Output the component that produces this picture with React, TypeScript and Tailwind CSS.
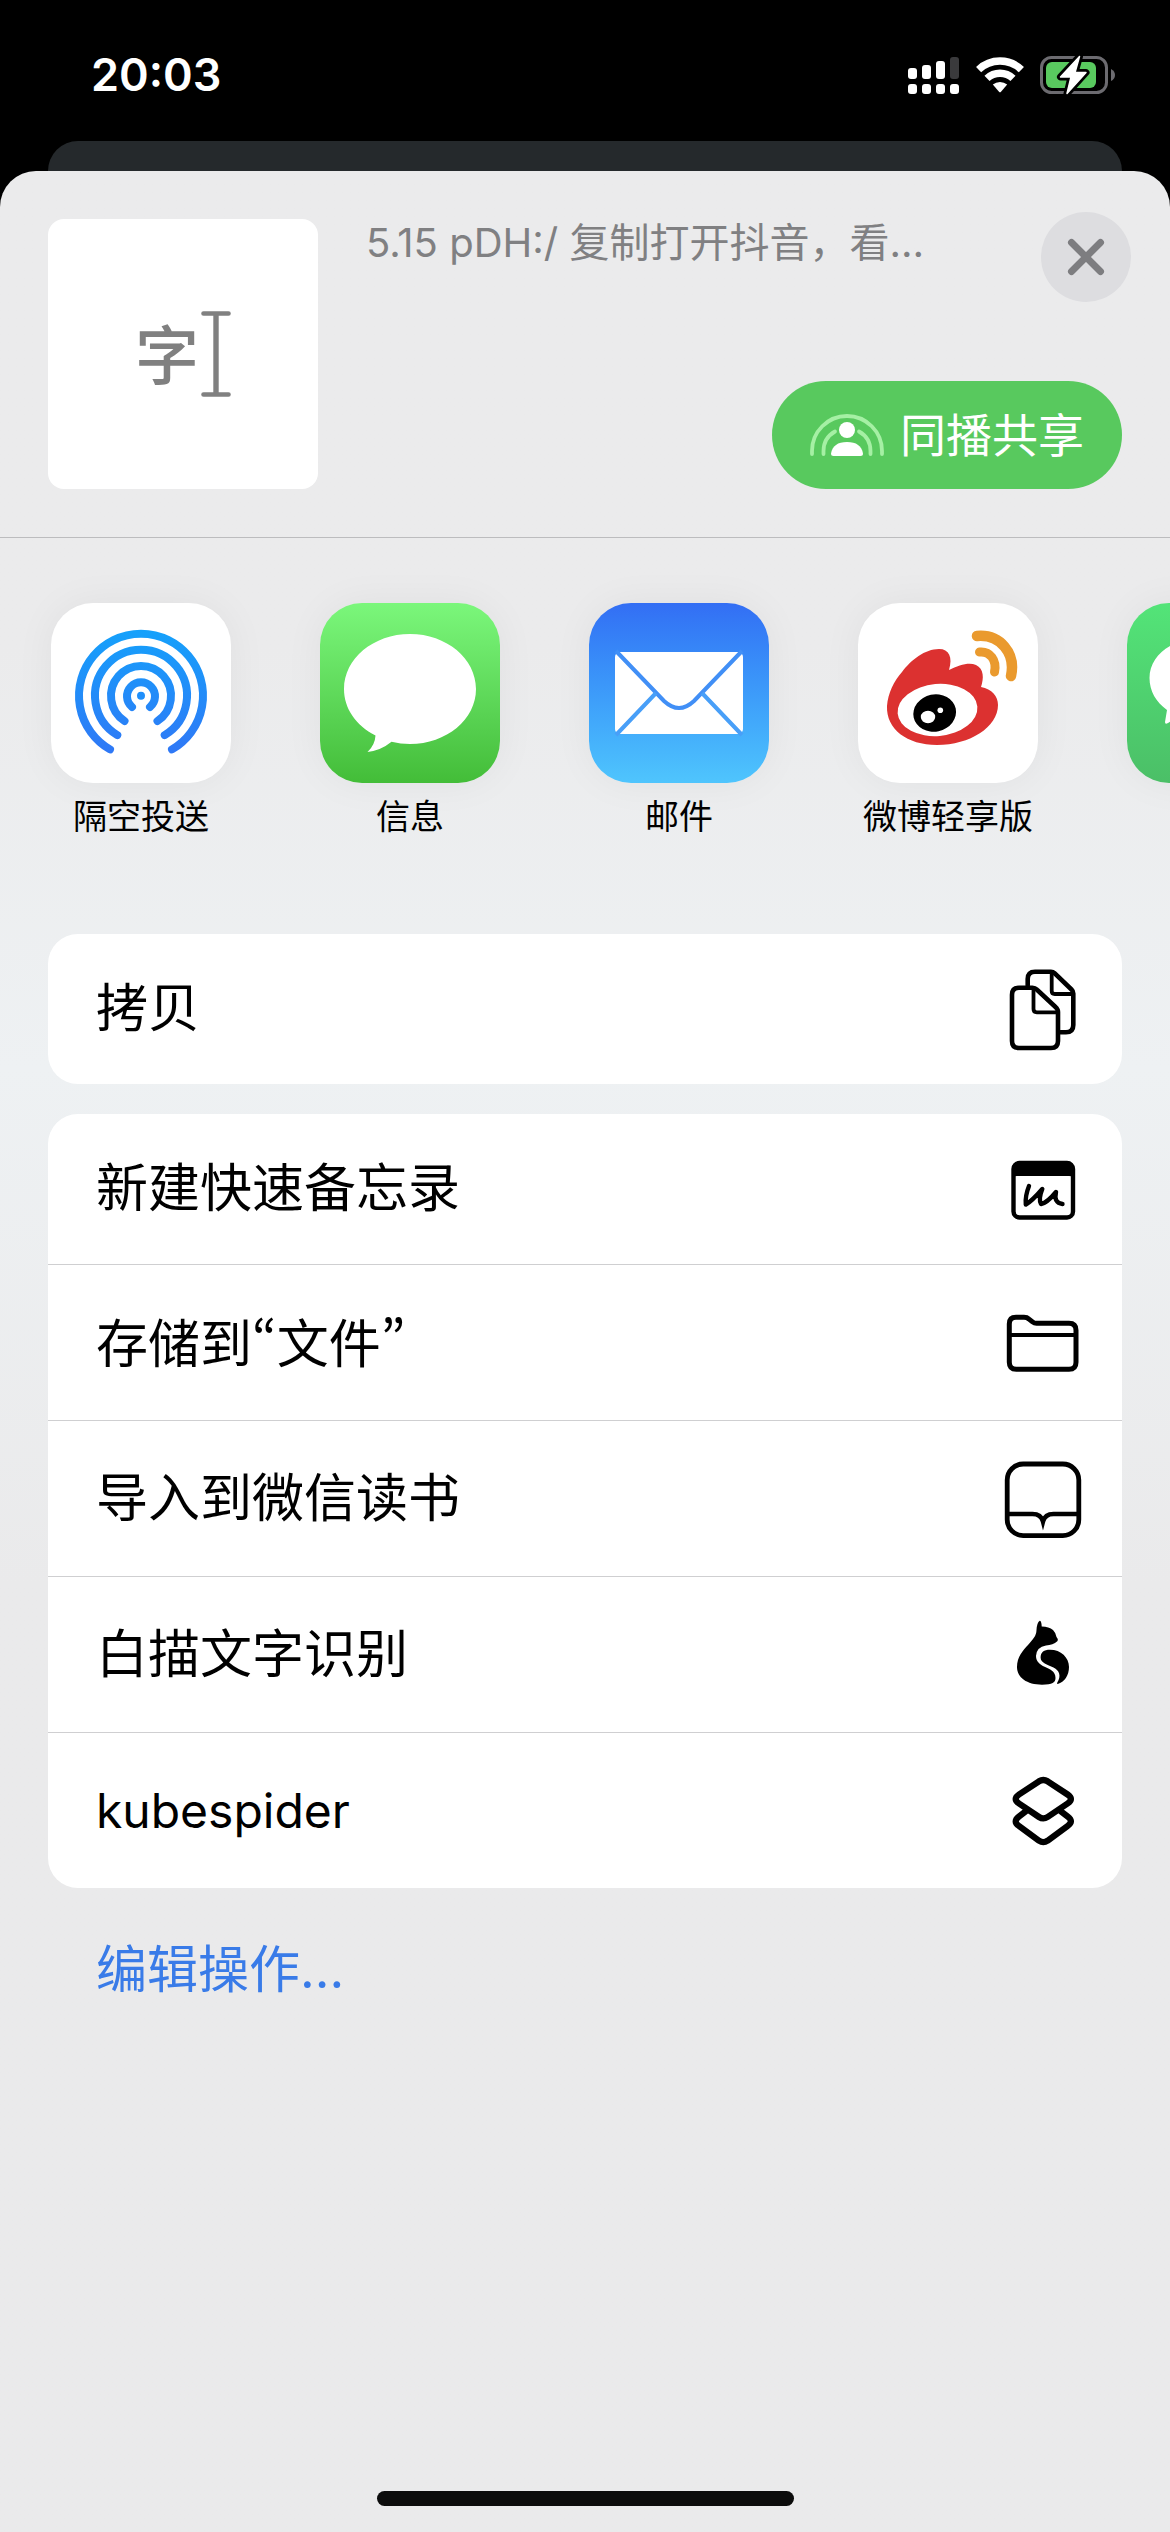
import type { ReactNode } from "react";

/* ---------- status bar ---------- */

function SignalIcon() {
  return (
    <svg width="52" height="38" viewBox="0 0 52 38" fill="#fff" aria-hidden="true">
      <rect x="0" y="12" width="9" height="11" rx="3" />
      <rect x="14" y="9" width="9" height="14" rx="3" />
      <rect x="28" y="5" width="9" height="18" rx="3" />
      <rect x="42" y="1" width="9" height="22" rx="3" fill="#3a3a3c" />
      <rect x="0" y="28" width="9" height="10" rx="3" />
      <rect x="14" y="28" width="9" height="10" rx="3" />
      <rect x="28" y="28" width="9" height="10" rx="3" />
      <rect x="42" y="28" width="9" height="10" rx="3" />
    </svg>
  );
}

function WifiIcon() {
  return (
    <svg width="48" height="38" viewBox="0 0 48 38" aria-hidden="true">
      <g fill="none" stroke="#fff" strokeWidth="7.4">
        <path d="M2.6 13.6a31 31 0 0 1 42.8 0" />
        <path d="M11 22.4a19 19 0 0 1 26 0" />
      </g>
      <path d="M16.8 28.6a11 11 0 0 1 14.4 0L25 35.8q-1 1-2 0z" fill="#fff" />
    </svg>
  );
}

function BatteryIcon() {
  return (
    <svg width="76" height="40" viewBox="0 0 76 40" aria-hidden="true">
      <rect x="1.5" y="2.5" width="65" height="35" rx="10" fill="none" stroke="#6c6b70" strokeWidth="3" />
      <path d="M71 14q4 2 4 6t-4 6z" fill="#6c6b70" />
      <rect x="6" y="7" width="50" height="26" rx="6" fill="#59c95f" />
      <path
        d="M39.5 1.5 20.5 22H31l-4 16.5L46 17.5H35z"
        fill="#fff"
        stroke="#000"
        strokeWidth="7"
        strokeLinejoin="round"
        paintOrder="stroke"
      />
      <path d="M39.5 1.5 20.5 22H31l-4 16.5L46 17.5H35z" fill="#fff" stroke="#fff" strokeWidth="1.5" strokeLinejoin="round" />
    </svg>
  );
}

/* ---------- header ---------- */

function CursorIcon() {
  return (
    <svg width="30" height="86" viewBox="0 0 30 86" fill="none" stroke="#808080" strokeLinecap="round" aria-hidden="true">
      <path d="M2.5 2.5h25M2.5 83.5h25" strokeWidth="4.6" />
      <path d="M15 4v78" strokeWidth="5.4" />
    </svg>
  );
}

function SharePlayIcon() {
  return (
    <svg width="74" height="42" viewBox="0 0 74 42" aria-hidden="true">
      <g fill="none" stroke="#a5f0a4" strokeWidth="3.8" strokeLinecap="round">
        <path d="M2 40v-3a35 35 0 0 1 70 0v3" />
        <path d="M13.5 40v-3q0-13 11.500-19.500M60.500 40v-3q0-13-11.500-19.500" />
      </g>
      <circle cx="37" cy="16" r="8" fill="#fff" />
      <path d="M21 39.500Q23 28 37 28t16 11.500q0 2.500-2.500 2.500h-27q-2.500 0-2.500-2.500z" fill="#fff" />
    </svg>
  );
}

/* ---------- app icons ---------- */

function AirDropIcon() {
  return (
    <svg className="size-full" viewBox="0 0 180 180" fill="none" aria-hidden="true">
      <defs>
        <linearGradient id="airdrop" gradientUnits="userSpaceOnUse" x1="0" y1="27" x2="0" y2="150">
          <stop offset="0" stopColor="#15a1fb" />
          <stop offset="1" stopColor="#2f78f6" />
        </linearGradient>
      </defs>
      <g stroke="url(#airdrop)" strokeWidth="8" strokeLinecap="round">
        <path d="M59 146.400a62 62 0 1 1 62 0" />
        <path d="M66.300 132.100a46 46 0 1 1 47.400 0" />
        <path d="M73.500 118a30 30 0 1 1 33 0" />
        <path d="M81 104a14 14 0 1 1 18 0" />
      </g>
      <circle cx="90" cy="92.700" r="4" fill="#1f8ffb" />
    </svg>
  );
}

function MessagesIcon() {
  return (
    <svg className="size-full" viewBox="0 0 180 180" fill="#fff" aria-hidden="true">
      <path d="M90 31c36.500 0 66 24.600 66 55s-29.500 55-66 55q-9.500 0-18.500-2.200Q61 147.500 47.500 149q7.500-7 8-16.500C36 122.500 24 105.500 24 86c0-30.400 29.500-55 66-55z" />
    </svg>
  );
}

function MailIcon() {
  return (
    <svg className="size-full" viewBox="0 0 180 180" fill="none" aria-hidden="true">
      <rect x="26" y="49" width="128" height="82" rx="5" fill="#fff" />
      <g strokeWidth="4">
        <path d="M27 48 75 98q15 14 30 0l48-50" stroke="#418ff6" />
        <path d="M27 132 67 90M153 132l-40-42" stroke="#489ff8" />
      </g>
    </svg>
  );
}

function WeiboIcon() {
  return (
    <svg className="size-full" viewBox="0 0 180 180" fill="none" aria-hidden="true">
      <path
        d="M29 103C30 90 36 78 44 69 53 57 67 46 81 46c10 0 14 8 10 21 10-5 20-8 27-5 8 4 8 13 5 22 11 2 17 9 17 18 0 22-28 40-61 40-30 0-51-16-50-39z"
        fill="#dc3130"
      />
      <ellipse cx="79.500" cy="107" rx="40" ry="26" transform="rotate(-5 79.500 107)" fill="#fff" />
      <ellipse cx="76.700" cy="110" rx="21.500" ry="18.600" transform="rotate(-12 76.700 110)" fill="#000" />
      <ellipse cx="70" cy="114" rx="7.200" ry="6.200" fill="#fff" />
      <circle cx="82.300" cy="107.300" r="2.800" fill="#fff" />
      <path d="M119 33C142 31 158 50 153 73" stroke="#ea9a2e" strokeWidth="10.500" strokeLinecap="round" />
      <path d="M121.500 49C132 48 139 57 136.500 69" stroke="#ea9a2e" strokeWidth="9" strokeLinecap="round" />
    </svg>
  );
}

function WeChatIcon() {
  return (
    <svg className="size-full" viewBox="0 0 180 180" fill="#fff" aria-hidden="true">
      <path d="M67 37c25 0 45 17 45 38s-20 38-45 38q-6 0-12-1.500L41 120q-3 2-3-1l2-12C29 99 22.500 88 22.500 75c0-21 20-38 44.500-38z" />
      <ellipse cx="116" cy="111" rx="37" ry="31" />
    </svg>
  );
}

/* ---------- action icons ---------- */

function ActionIcon({ children }: { children: ReactNode }) {
  return (
    <svg
      className="size-[84px] shrink-0"
      viewBox="0 0 84 84"
      fill="none"
      stroke="#000"
      strokeLinecap="round"
      strokeLinejoin="round"
      aria-hidden="true"
    >
      {children}
    </svg>
  );
}

const copyIcon = (
  <ActionIcon>
    <g strokeWidth="4.600">
      <path d="M26.700 18.500V12q0-7.300 7.300-7.300h16q2 0 3.500 1.500L70.500 22.500q1.800 1.700 1.800 4V58q0 7.300-7.300 7.300h-5.500" />
      <path d="M50.700 5.500V24q0 3 3 3H72" strokeWidth="3.800" />
      <path d="M18 20.700h13.500q2.500 0 4.500 2L54.500 40q2.500 2.200 2.500 5v29q0 7-7 7H18q-7 0-7-7V27.700q0-7 7-7z" />
      <path d="M32.500 21.500V42q0 3.300 3.300 3.300H56.500" strokeWidth="3.800" />
    </g>
  </ActionIcon>
);

const memoIcon = (
  <ActionIcon>
    <rect x="12.500" y="16" width="59.500" height="54.500" rx="6" strokeWidth="4.400" />
    <path d="M12 29v-7q0-6 6-6h48q6 0 6 6v7q-1-1-4-1H16q-3 0-4 1z" fill="#000" strokeWidth="2" />
    <path
      d="M28 39Q24 49 24.800 57.500 31 54 41.300 42q-4 10-1.300 15 6-1 15-12-2.500 11 6.500 12"
      strokeWidth="4.400"
    />
  </ActionIcon>
);

const folderIcon = (
  <ActionIcon>
    <path
      d="M8.300 23q0-6.700 6.700-6.700h8q3 0 5 1.800l3.500 2.800q1.800 1.400 4 1.400H68q7 0 7 7v32q0 7-7 7H15.300q-7 0-7-7z"
      strokeWidth="5"
    />
    <path d="M9 34h65" strokeWidth="4.200" />
  </ActionIcon>
);

const bookIcon = (
  <ActionIcon>
    <rect x="6.200" y="7" width="71.600" height="71.600" rx="16" strokeWidth="4.800" />
    <path d="M7 57h24.500q8.500 0 10.500 7.500Q44 57 52.500 57H77" strokeWidth="4.600" strokeLinejoin="miter" />
  </ActionIcon>
);

const catIcon = (
  <ActionIcon>
    <g fill="#000" stroke="none">
      <path d="M38.700 7.700q1.800 0 2 5.800 7.300.2 11.300 3.500Q55 20 55.500 24q2.200 2.500.8 4.300Q52 32 45 32.500 35.500 34 35 43c0 5.500 4 8.500 8 10.500 6 3 11.500 4.500 11.500 11.500 0 4.500-3 6.700-13.500 6.700C26 71.700 16 64.500 16 54c0-10 6-16.500 11-22 5-5.700 8.300-9 8.500-15q.4-7.500 3.200-9.300z" />
      <path d="M39.600 44.500C39.600 39 43 36.700 49 36.700 60 36.700 68 44.500 68 54c0 8.500-4.500 15-11.300 17q-1 0-.5-1.200c4.300-7 2.300-12.300-3.700-15.300-6-2.800-12.900-4.500-12.900-10z" />
    </g>
  </ActionIcon>
);

const shortcutsIcon = (
  <ActionIcon>
    <g strokeWidth="6.300">
      <path d="M38 12.300q4.300-2.600 8.600 0l20 13.200q6.600 4.500 0 9L46.600 48q-4.300 2.800-8.600 0L18 34.500q-6.600-4.500 0-9z" />
      <path d="M24.500 42.500 18 47.500q-6.600 5 0 9.500l20 14.700q4.300 2.800 8.600 0l20-14.700q6.600-4.500 0-9.500l-6.500-5" />
    </g>
  </ActionIcon>
);

/* ---------- data ---------- */

const apps = [
  { name: "隔空投送", tile: "bg-white", icon: <AirDropIcon /> },
  { name: "信息", tile: "bg-linear-to-b from-[#7bf77b] to-[#43bd38]", icon: <MessagesIcon /> },
  { name: "邮件", tile: "bg-linear-to-b from-[#336ef4] to-[#4fc5fd]", icon: <MailIcon /> },
  { name: "微博轻享版", tile: "bg-white", icon: <WeiboIcon /> },
  { name: "", tile: "bg-linear-to-b from-[#53e478] to-[#4bbf67]", icon: <WeChatIcon /> },
];

/* Quotation marks take the Korean face, whose marks are curled and narrow. */
function Quote({ children }: { children: string }) {
  return (
    <span lang="ko" className="font-['Noto_Sans_CJK_KR',sans-serif]">
      {children}
    </span>
  );
}

const actions: { id: string; label: ReactNode; icon: ReactNode }[] = [
  { id: "memo", label: "新建快速备忘录", icon: memoIcon },
  {
    id: "files",
    label: (
      <>
        存储到<Quote>“</Quote>文件<Quote>”</Quote>
      </>
    ),
    icon: folderIcon,
  },
  { id: "weread", label: "导入到微信读书", icon: bookIcon },
  { id: "baimiao", label: "白描文字识别", icon: catIcon },
  { id: "kubespider", label: <span className="text-[48px]">kubespider</span>, icon: shortcutsIcon },
];

function ActionRow({ label, icon }: { label: ReactNode; icon: ReactNode }) {
  return (
    <button
      type="button"
      className="flex h-[156px] w-full items-center justify-between border-t border-[#cfcfd1] pr-[37px] pl-12 text-left text-[52px] leading-[72px] text-black first:h-[150px] first:border-t-0"
    >
      <span>{label}</span>
      {icon}
    </button>
  );
}

export default function App() {
  return (
    <div
      lang="zh-CN"
      className="flex min-h-screen flex-col overflow-hidden bg-black font-['Inter','Noto_Sans_CJK_SC',sans-serif]"
    >
      <header className="flex h-[141px] items-center justify-between pt-[8px] pr-[54px] pl-[91px]">
        <time className="text-[45px] leading-[56px] font-semibold text-white">20:03</time>
        <div className="flex items-center gap-[16px]">
          <SignalIcon />
          <WifiIcon />
          <BatteryIcon />
        </div>
      </header>
      <div className="mx-12 h-[30px] rounded-t-[30px] bg-[#25292c]" />

      <main className="flex flex-1 flex-col rounded-t-[36px] bg-linear-to-b from-[#ebebec] from-20% via-[#eef1f3] via-38% to-[#eaeaeb] to-60%">
        <section className="flex gap-12 border-b border-[#bcbcbe] pt-[41px] pr-[39px] pb-12 pl-12">
          <div className="mt-[7px] flex size-[270px] shrink-0 items-center justify-center gap-[2px] rounded-[16px] bg-white">
            <span className="pt-1 text-[64px] leading-[80px] font-medium text-[#808080]">字</span>
            <CursorIcon />
          </div>
          <div className="flex min-w-0 flex-1 flex-col justify-between">
            <div className="flex items-start justify-between gap-6">
              <h1 className="truncate text-[40px] leading-[62px] text-[#808082]">5.15 pDH:/ 复制打开抖音，看…</h1>
              <button
                type="button"
                aria-label="关闭"
                className="flex size-[90px] shrink-0 items-center justify-center rounded-full bg-[#dddde0]"
              >
                <svg width="38" height="38" viewBox="0 0 38 38" stroke="#7d7d80" strokeWidth="7" strokeLinecap="round" aria-hidden="true">
                  <path d="M4.500 4.500l29 29M33.500 4.500l-29 29" />
                </svg>
              </button>
            </div>
            <button
              type="button"
              className="mr-[9px] flex h-[108px] items-center gap-4 self-end rounded-full bg-[#58c95e] px-[38px] text-[46px] leading-[64px] text-white"
            >
              <SharePlayIcon />
              <span>同播共享</span>
            </button>
          </div>
        </section>

        <nav className="flex gap-[89px] overflow-hidden pt-[65px] pb-[95px] pl-[51px]">
          {apps.map((app, i) => (
            <button
              key={i}
              type="button"
              aria-label={app.name || "微信"}
              className="flex w-[180px] shrink-0 flex-col items-center gap-3 text-[34px] leading-[44px] text-black"
            >
              <span className={`block size-[180px] overflow-hidden rounded-[42px] shadow-[0_0_40px_rgba(0,0,0,0.05)] ${app.tile}`}>
                {app.icon}
              </span>
              <span className="whitespace-nowrap">{app.name}</span>
            </button>
          ))}
        </nav>

        <div className="mx-12 flex flex-col gap-[30px]">
          <div className="overflow-hidden rounded-[30px] bg-white">
            <ActionRow label="拷贝" icon={copyIcon} />
          </div>
          <div className="overflow-hidden rounded-[30px] bg-white">
            {actions.map((action) => (
              <ActionRow key={action.id} label={action.label} icon={action.icon} />
            ))}
          </div>
        </div>

        <button type="button" className="mt-[46px] ml-24 self-start text-[51px] leading-[72px] text-[#397be8]">
          编辑操作...
        </button>

        <div className="mt-auto mb-[26px] h-[15px] w-[417px] self-center rounded-full bg-[#0c0c0c]" />
      </main>
    </div>
  );
}
